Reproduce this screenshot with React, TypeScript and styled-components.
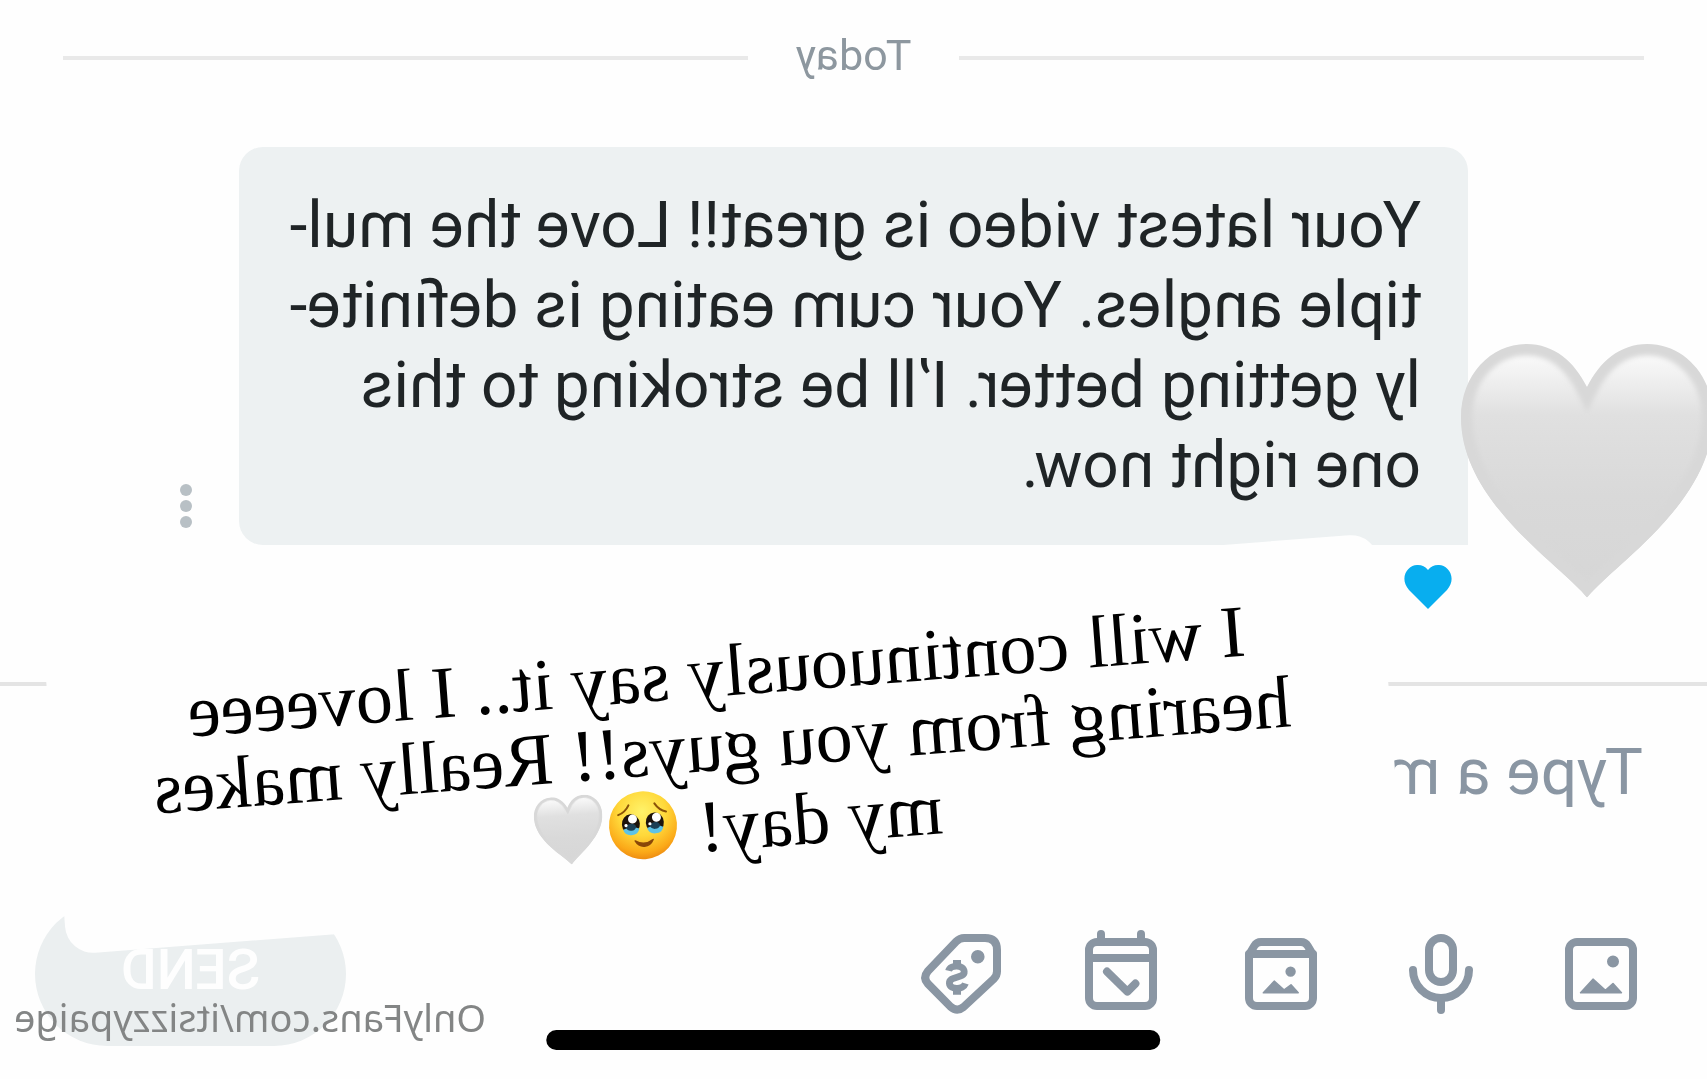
import React from "react";
import styled, { createGlobalStyle } from "styled-components";

const GlobalStyle = createGlobalStyle`
  *, *::before, *::after { box-sizing: border-box; }
  body { margin: 0; background: #fefefe; }
  button, input { font: inherit; border: 0; background: none; padding: 0; }
`;

const slate = "#8a96a3";

/* The whole conversation is shown flipped left to right, like a selfie capture. */
const Screen = styled.main`
  position: relative;
  display: flex;
  flex-direction: column;
  min-height: 100vh;
  overflow: hidden;
  padding-top: 30px;
  background: #fefefe;
  color: #1f2426;
  font-family: Roboto, "Liberation Sans", sans-serif;
  transform: scaleX(-1);
`;

const DayDivider = styled.div`
  display: flex;
  align-items: center;
  gap: 48px;
  padding: 0 63px;
  font-size: 43px;
  line-height: 50px;
  color: #8d979f;

  &::before,
  &::after {
    content: "";
    flex: 1;
    height: 4px;
    margin-top: 6px;
    background: #e9e9e9;
  }
`;

const MessageRow = styled.section`
  display: grid;
  grid-template-columns: 14% 1fr 14%;
  align-items: end;
  margin-top: 67px;
`;

const Bubble = styled.p`
  grid-column: 2;
  margin: 0;
  padding: 39px 47px;
  border-radius: 24px 24px 24px 0;
  background: #edf1f2;
  font-size: 64px;
  line-height: 80px;
  white-space: nowrap;
`;

const Line = styled.span`
  display: block;
`;

const MoreButton = styled.button`
  display: flex;
  flex-direction: column;
  gap: 4px;
  margin: 0 0 17px 47px;
`;

const Dot = styled.span`
  width: 12px;
  height: 12px;
  border-radius: 50%;
  background: #b8c0c5;
`;

const LikeButton = styled.button`
  align-self: flex-start;
  margin: 19px 0 0 calc(14% + 16px);
  height: 46px;

  svg { display: block; }
`;

const Sticker = styled.svg`
  position: absolute;
  left: -6px;
  top: 344px;
  width: 252px;
  height: 256px;
`;

const Composer = styled.form`
  margin-top: 72px;
  padding-top: 46px;
  border-top: 4px solid #e4e4e4;
`;

const MessageInput = styled.input`
  display: block;
  width: 100%;
  height: 80px;
  padding: 0 64px;
  font-size: 64px;
  outline: none;

  &::placeholder { color: ${slate}; opacity: 1; }
`;

const Toolbar = styled.div`
  display: flex;
  align-items: center;
  gap: 64px;
  margin-top: 90px;
  padding: 0 35px 0 58px;
`;

const ToolButton = styled.button`
  width: 96px;
  height: 96px;

  svg {
    display: block;
    width: 100%;
    height: 100%;
    fill: none;
    stroke: ${slate};
    stroke-width: 2;
    stroke-linecap: round;
    stroke-linejoin: round;
  }

  .solid {
    fill: ${slate};
    stroke-width: 0.4;
  }
`;

const SendButton = styled.button`
  width: 311px;
  height: 144px;
  margin-left: auto;
  padding-bottom: 8px;
  border-radius: 72px;
  background: #ebeff0;
  color: #fefefe;
  font-size: 55px;
  font-weight: 500;
`;

const Note = styled.aside`
  position: absolute;
  left: 18.5%;
  top: 584px;
  width: 78.4%;
  padding: 50px 0 42px;
  border-radius: 28px;
  background: #fefefe;
  color: #000;
  font-family: "Liberation Serif", serif;
  font-size: 74px;
  line-height: 74px;
  text-align: center;
  white-space: nowrap;
  transform: rotate(4.4deg);
`;

const Emoji = styled.svg`
  width: 74px;
  height: 74px;
  vertical-align: -6px;
`;

const HomeBar = styled.div`
  position: absolute;
  left: 50%;
  bottom: 29px;
  width: 36%;
  height: 20px;
  border-radius: 10px;
  background: #000;
  transform: translateX(-50%);
`;

const Watermark = styled.a`
  position: absolute;
  right: 14px;
  bottom: 34px;
  color: #838585;
  font-family: "Noto Sans", "Open Sans", sans-serif;
  font-size: 38px;
  line-height: 56px;
  text-decoration: none;
`;

const heartPath =
  "M50 100 C38 86 0 62 0 29 C0 12 12 0 26 0 C37 0 45 7 50 17 C55 7 63 0 74 0 C88 0 100 12 100 29 C100 62 62 86 50 100 Z";

function HeartShape({ id }: { id: string }) {
  return (
    <>
      <defs>
        <linearGradient id={`${id}-fill`} x1="0" y1="0" x2="0" y2="1">
          <stop offset="0.04" stopColor="#fafafa" />
          <stop offset="0.28" stopColor="#e0e0e0" />
          <stop offset="0.6" stopColor="#d9d9d9" />
          <stop offset="1" stopColor="#d6d6d6" />
        </linearGradient>
        <clipPath id={`${id}-clip`}>
          <path d={heartPath} />
        </clipPath>
        <filter id={`${id}-soft`} x="-10%" y="-10%" width="120%" height="120%">
          <feGaussianBlur stdDeviation="1" />
        </filter>
      </defs>
      <g clipPath={`url(#${id}-clip)`}>
        <path d={heartPath} fill={`url(#${id}-fill)`} />
        <path d={heartPath} fill="none" stroke="#d8d8d8" strokeWidth="9" filter={`url(#${id}-soft)`} />
      </g>
    </>
  );
}

function TearyFace() {
  return (
    <Emoji viewBox="0 0 74 74" role="img" aria-label="face holding back tears">
      <defs>
        <radialGradient id="face" cx="0.5" cy="0.3" r="0.7">
          <stop offset="0" stopColor="#fff36a" />
          <stop offset="0.5" stopColor="#ffd83a" />
          <stop offset="0.85" stopColor="#fba918" />
          <stop offset="1" stopColor="#ee8c12" />
        </radialGradient>
      </defs>
      <circle cx="37" cy="37" r="34" fill="url(#face)" />
      <g fill="none" stroke="#8a5308" strokeWidth="2" strokeLinecap="round">
        <path d="M13 25 Q20 23 24 16" />
        <path d="M50 16 Q54 23 61 25" />
      </g>
      {[25, 49].map((x) => (
        <g key={x}>
          <ellipse cx={x} cy="35" rx="9" ry="10" fill="#1d130c" />
          <path d={`M${x - 8} 40 Q${x} 36 ${x + 8} 40 Q${x + 7} 46 ${x} 46 Q${x - 7} 46 ${x - 8} 40Z`} fill="#5fc3e6" />
          <ellipse cx={x} cy="38" rx="5" ry="3.5" fill="#1c3f55" />
          <circle cx={x - 2} cy="30" r="4.5" fill="#fff" />
          <circle cx={x + 5} cy="36" r="1.6" fill="#fff" />
        </g>
      ))}
      <path d="M28 52 Q37 58 46 52 Q43 58 37 58 Q31 58 28 52Z" fill="#8a4708" stroke="#8a4708" strokeWidth="1.5" strokeLinejoin="round" />
    </Emoji>
  );
}

const tools = [
  {
    label: "Add image",
    art: (
      <>
        <rect x="4" y="4" width="16" height="16" rx="2" />
        <circle className="solid" cx="9" cy="8.9" r="1.3" />
        <path className="solid" d="M6.9 16.7 9 14.4 10.9 16.1 14 13.3 17.1 16.7Z" />
      </>
    ),
  },
  {
    label: "Record voice",
    art: (
      <>
        <rect x="9" y="3" width="6" height="11" rx="3" />
        <path d="M5 11a7 7 0 0 0 14 0M12 18v3" />
      </>
    ),
  },
  {
    label: "Add from vault",
    art: (
      <>
        <path d="M4 7.2 5.3 5Q5.9 4 7 4H17Q18.1 4 18.7 5L20 7.2V18a2 2 0 0 1-2 2H6a2 2 0 0 1-2-2Z" />
        <path d="M4 7H20" />
        <circle className="solid" cx="9.6" cy="11.4" r="1.1" />
        <path className="solid" d="M7.7 16.7 9.5 14.7 11.2 16 13.7 13.8 16.4 16.7Z" />
      </>
    ),
  },
  {
    label: "Schedule",
    art: (
      <>
        <rect x="4" y="4" width="16" height="16" rx="2" />
        <path d="M4 8H20M7 2V4M17 2V4M8.4 14.4 10.4 16.4 15.5 11.4" />
      </>
    ),
  },
  {
    label: "Set price",
    art: (
      <>
        <path d="M6 3Q3 3 3 6V11.3Q3 12.4 3.8 13.2L11.4 20.3Q13 21.6 14.6 20.2L20.3 14.4Q21.6 12.9 20.3 11.3L13.2 3.9Q12.3 3 11.2 3Z" />
        <circle className="solid" cx="7.8" cy="7.7" r="1.5" />
        <path d="M15.1 11.2C14.7 9.6 11.3 9.6 11.2 11.4 11.1 13.2 15 12.4 14.9 14.3 14.8 16 11.4 16 10.9 14.4" strokeWidth="1.7" strokeLinecap="butt" />
        <path d="M13 8.5V10.4M13 15.3V17.2" strokeLinecap="butt" />
      </>
    ),
  },
];

const messageLines = [
  "Your latest video is great!! Love the mul-",
  "tiple angles. Your cum eating is definite-",
  "ly getting better. I’ll be stroking to this",
  "one right now.",
];

export default function App() {
  return (
    <>
      <GlobalStyle />
      <Screen>
        <DayDivider>Today</DayDivider>

        <MessageRow>
          <Bubble>
            {messageLines.map((text) => (
              <Line key={text}>{text}</Line>
            ))}
          </Bubble>
          <MoreButton type="button" aria-label="Message options">
            <Dot />
            <Dot />
            <Dot />
          </MoreButton>
        </MessageRow>

        <LikeButton type="button" aria-label="Like message">
          <svg width="48" height="46" viewBox="0 0 48 46">
            <path
              d="M24 45 5 26C-6 13 5 0 14 1Q20 1 24 6 28 1 34 1C43 0 54 13 43 26Z"
              fill="#08aeef"
            />
          </svg>
        </LikeButton>

        <Composer onSubmit={(event) => event.preventDefault()}>
          <MessageInput type="text" aria-label="Message" placeholder="Type a m" />
          <Toolbar>
            {tools.map((tool) => (
              <ToolButton key={tool.label} type="button" aria-label={tool.label}>
                <svg viewBox="0 0 24 24">{tool.art}</svg>
              </ToolButton>
            ))}
            <SendButton type="submit">SEND</SendButton>
          </Toolbar>
        </Composer>

        <Note>
          <Line>I will continuously say it.. I loveeee</Line>
          <Line>hearing from you guys!! Really makes</Line>
          <Line>
            my day! <TearyFace />
            <Emoji viewBox="-4 -3 108 108" role="img" aria-label="white heart">
              <HeartShape id="small-heart" />
            </Emoji>
            {"\u00a0"}
          </Line>
        </Note>

        <Sticker viewBox="0 0 100 101" preserveAspectRatio="none" role="img" aria-label="white heart">
          <HeartShape id="big-heart" />
        </Sticker>
        <HomeBar />
        <Watermark href="#profile">OnlyFans.com/itsizzypaige</Watermark>
      </Screen>
    </>
  );
}
